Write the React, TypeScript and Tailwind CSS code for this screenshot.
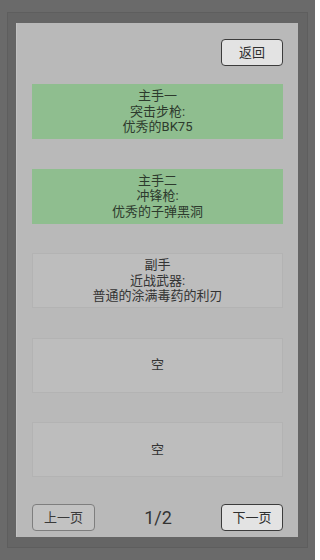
const font = { fontFamily: 'Roboto, "Noto Sans CJK SC", sans-serif' };

type Slot = { lines: string[]; equipped: boolean };

const slots: Slot[] = [
  { lines: ["主手一", "突击步枪:", "优秀的BK75"], equipped: true },
  { lines: ["主手二", "冲锋枪:", "优秀的子弹黑洞"], equipped: true },
  { lines: ["副手", "近战武器:", "普通的涂满毒药的利刃"], equipped: false },
  { lines: ["空"], equipped: false },
  { lines: ["空"], equipped: false },
];

const App = () => {
  return (
    <div className="w-[315px] h-[560px] bg-[#6a6a6a] pt-[12px] px-[7px]" style={font}>
      <div className="h-[536px] bg-[#656565] border border-[#5e5e5e] pt-[10px] pl-[8px] pr-[9px] pb-[10px]">
        <div className="h-full bg-[#b9b9b9] border-l border-[#c2c2c2] flex flex-col px-[15px] pt-[16px]">
          <div className="flex justify-end">
            <button className="w-[62px] h-[27px] bg-[#e3e3e3] border border-[#3c3c3c] rounded-[4px] text-[13px] text-[#2f2f2f]">
              返回
            </button>
          </div>

          <div className="flex flex-col gap-[29.5px] mt-[18px]">
            {slots.map((s, i) => (
              <div
                key={i}
                className={
                  s.equipped
                    ? "h-[55px] bg-[#8fbe8f] flex flex-col items-center justify-center text-[13px] leading-[15.5px] text-[#2d3a2d]"
                    : "h-[55px] bg-[#bdbdbd] border border-[#b3b3b3] flex flex-col items-center justify-center text-[13px] leading-[15.5px] text-[#333333]"
                }
              >
                {s.lines.map((l, j) => (
                  <span key={j}>{l}</span>
                ))}
              </div>
            ))}
          </div>

          <div className="mt-auto mb-[6px] flex items-center justify-between">
            <button className="w-[63px] h-[27px] bg-[#c2c2c2] border border-[#7e7e7e] rounded-[4px] text-[13px] text-[#3a3a3a]">
              上一页
            </button>
            <span className="text-[18px] text-[#333333]">1/2</span>
            <button className="w-[62px] h-[27px] bg-[#e3e3e3] border border-[#3c3c3c] rounded-[4px] text-[13px] text-[#2f2f2f]">
              下一页
            </button>
          </div>
        </div>
      </div>
    </div>
  );
};

export default App;
